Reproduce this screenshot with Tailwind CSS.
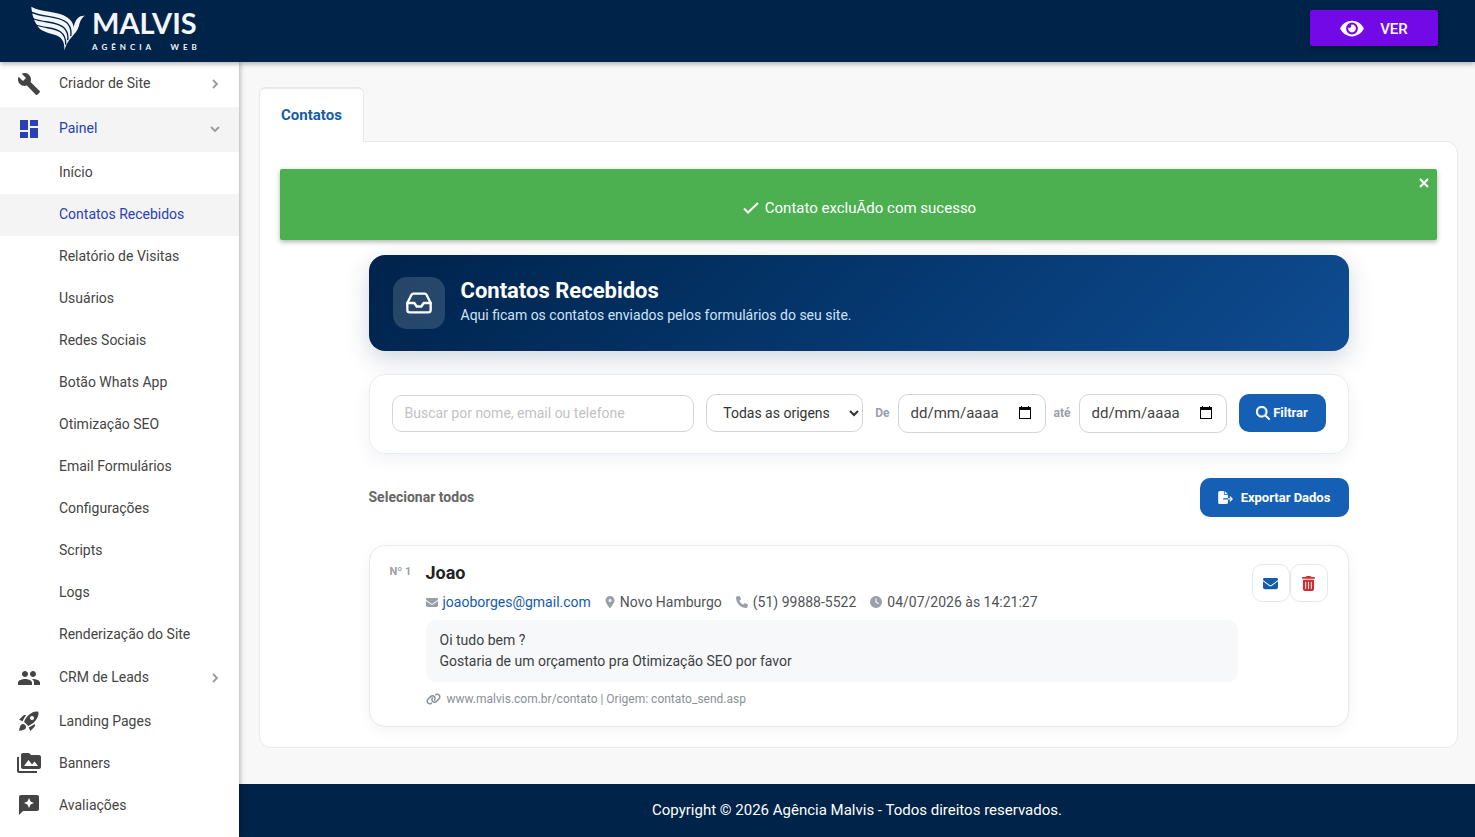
<!DOCTYPE html>
<html lang="pt-BR">
<head>
<meta charset="utf-8">
<meta name="viewport" content="width=device-width, initial-scale=1">
<title>Contatos Recebidos</title>
<script src="https://cdn.jsdelivr.net/npm/@tailwindcss/browser@4"></script>
</head>
<body class="flex min-h-screen flex-col bg-[#f8f8f8] font-[Roboto,sans-serif] text-sm text-[#444]">

<header class="relative z-20 flex h-[62px] shrink-0 items-center justify-between bg-[#002349] pr-[37px] pb-[6px] pl-[31px] shadow-[0_2px_5px_rgba(0,0,0,0.3)]">
  <a href="#" class="flex items-center gap-[7px] text-[#f2f5fc]" aria-label="Malvis Agência Web">
    <svg class="h-[45px] w-[54px]" viewBox="94 22 162 134" fill="none">
      <path fill="currentColor" d="M95 24C125 42 175 36 203 56C217 66 221 76 222 86C226 64 236 49 256 51C244 57 241 70 237 84C231 106 206 116 194 154C196 124 182 112 162 107C140 101 120 96 111 78C107 71 104 66 103 60C100 54 98 48 98 42C96 36 95 30 95 24Z"/>
      <path stroke="#002349" stroke-width="4" d="M94 40C130 56 178 50 201 71C213 82 216 94 213 112M99 59C135 73 172 67 192 86C204 98 207 108 204 124M106 77C135 90 162 84 182 99C194 108 199 122 198 138"/>
    </svg>
    <span class="flex flex-col pt-[5px]">
      <span class="font-[Lato,sans-serif] text-[29px] leading-7 font-bold">MALVIS</span>
      <span class="flex justify-between pt-[6px] font-[Lato,sans-serif] text-[8px] leading-[9px] font-bold tracking-[4px]"><span>AGÊNCIA</span><span class="-mr-1">WEB</span></span>
    </span>
  </a>
  <button type="button" class="flex h-9 w-32 items-center justify-center gap-4 rounded-xs bg-[#7209e6] text-[15px] font-medium text-white shadow-[0_2px_5px_rgba(0,0,0,0.25)]">
    <svg class="h-[21px] w-6" viewBox="0 0 576 512" fill="currentColor"><path d="M572.52 241.4C518.29 135.59 410.93 64 288 64S57.68 135.64 3.48 241.41a32.35 32.35 0 0 0 0 29.19C57.71 376.41 165.07 448 288 448s230.32-71.64 284.52-177.41a32.35 32.35 0 0 0 0-29.19zM288 400a144 144 0 1 1 144-144 143.93 143.93 0 0 1-144 144zm0-240a95.31 95.31 0 0 0-25.31 3.79 47.85 47.85 0 0 1-66.9 66.9A95.78 95.78 0 1 0 288 160z"/></svg>
    <span class="pt-1">VER</span>
  </button>
</header>

<div class="flex flex-1">
  <aside class="relative z-10 w-[239px] shrink-0 bg-white shadow-[1px_0_5px_rgba(0,0,0,0.3)]">
    <nav>
      <a href="#" class="flex h-[45px] items-center pr-[18px] pb-0.5 pl-[17px]">
        <svg class="h-6 w-6" viewBox="0 0 24 24" fill="currentColor"><path d="M22.7 19l-9.1-9.1c.9-2.3.4-5-1.5-6.9-2-2-5-2.4-7.4-1.3L9 6 6 9 1.6 4.7C.4 7.1.9 10.1 2.9 12.1c1.9 1.9 4.6 2.4 6.9 1.5l9.1 9.1c.4.4 1 .4 1.4 0l2.3-2.3c.5-.4.5-1.1.1-1.4z"/></svg>
        <span class="ml-[18px] flex-1 pb-0.5">Criador de Site</span>
        <svg class="h-3 w-3 text-[#999]" viewBox="0 0 12 12" fill="none" stroke="currentColor" stroke-width="1.8"><path d="M4 2l4 4-4 4"/></svg>
      </a>
      <a href="#" class="flex h-[45px] items-center bg-[#f4f4f4] pr-[18px] pb-0.5 pl-[17px] text-[#2a40b8]">
        <svg class="h-6 w-6" viewBox="0 0 24 24" fill="currentColor"><path d="M3 13h8V3H3v10zm0 8h8v-6H3v6zm10 0h8V11h-8v10zm0-18v6h8V3h-8z"/></svg>
        <span class="ml-[18px] flex-1 pb-0.5">Painel</span>
        <svg class="h-3 w-3 text-[#999]" viewBox="0 0 12 12" fill="none" stroke="currentColor" stroke-width="1.8"><path d="M2 4l4 4 4-4"/></svg>
      </a>
      <a href="#" class="flex h-[42px] items-center pb-0.5 pl-[59px]">Início</a>
      <a href="#" class="flex h-[42px] items-center bg-[#f4f4f4] pb-0.5 pl-[59px] text-[#2a40b8]">Contatos Recebidos</a>
      <a href="#" class="flex h-[42px] items-center pb-0.5 pl-[59px]">Relatório de Visitas</a>
      <a href="#" class="flex h-[42px] items-center pb-0.5 pl-[59px]">Usuários</a>
      <a href="#" class="flex h-[42px] items-center pb-0.5 pl-[59px]">Redes Sociais</a>
      <a href="#" class="flex h-[42px] items-center pb-0.5 pl-[59px]">Botão Whats App</a>
      <a href="#" class="flex h-[42px] items-center pb-0.5 pl-[59px]">Otimização SEO</a>
      <a href="#" class="flex h-[42px] items-center pb-0.5 pl-[59px]">Email Formulários</a>
      <a href="#" class="flex h-[42px] items-center pb-0.5 pl-[59px]">Configurações</a>
      <a href="#" class="flex h-[42px] items-center pb-0.5 pl-[59px]">Scripts</a>
      <a href="#" class="flex h-[42px] items-center pb-0.5 pl-[59px]">Logs</a>
      <a href="#" class="flex h-[42px] items-center pb-0.5 pl-[59px]">Renderização do Site</a>
      <a href="#" class="flex h-11 items-center pr-[18px] pl-[17px]">
        <svg class="h-6 w-6" viewBox="0 0 24 24" fill="currentColor"><path d="M16 11c1.66 0 2.99-1.34 2.99-3S17.66 5 16 5c-1.66 0-3 1.34-3 3s1.34 3 3 3zm-8 0c1.66 0 2.99-1.34 2.99-3S9.66 5 8 5C6.34 5 5 6.34 5 8s1.34 3 3 3zm0 2c-2.33 0-7 1.17-7 3.5V19h14v-2.5c0-2.33-4.67-3.5-7-3.5zm8 0c-.29 0-.62.02-.97.05 1.16.84 1.97 1.97 1.97 3.45V19h6v-2.5c0-2.33-4.67-3.5-7-3.5z"/></svg>
        <span class="ml-[18px] flex-1 pb-0.5">CRM de Leads</span>
        <svg class="h-3 w-3 text-[#999]" viewBox="0 0 12 12" fill="none" stroke="currentColor" stroke-width="1.8"><path d="M4 2l4 4-4 4"/></svg>
      </a>
      <a href="#" class="flex h-[42px] items-center pl-[17px]">
        <svg class="h-6 w-6" viewBox="0 0 24 24" fill="currentColor"><path d="M9.19 6.35c-2.04 2.29-3.44 5.58-3.57 5.89L2 10.69l4.05-4.05c.47-.47 1.15-.68 1.81-.55l1.33.26zM11.17 17s3.74-1.55 5.89-3.7c5.4-5.4 4.5-9.62 4.21-10.57-.95-.3-5.17-1.19-10.57 4.21C8.55 9.09 7 12.83 7 12.83L11.17 17zm6.48-2.19c-2.29 2.04-5.58 3.44-5.89 3.57L13.31 22l4.05-4.05c.47-.47.68-1.15.55-1.81l-.26-1.33zM9 18c0 .83-.34 1.58-.88 2.12C6.94 21.3 2 22 2 22s.7-4.94 1.88-6.12C4.42 15.34 5.17 15 6 15c1.66 0 3 1.34 3 3zm4-9c0-1.1.9-2 2-2s2 .9 2 2-.9 2-2 2-2-.9-2-2z"/></svg>
        <span class="ml-[18px]">Landing Pages</span>
      </a>
      <a href="#" class="flex h-[42px] items-center pl-[17px]">
        <svg class="h-6 w-6" viewBox="0 0 24 24" fill="currentColor"><path d="M2 6H0v5h.01L0 20c0 1.1.9 2 2 2h18v-2H2V6zm20-2h-8l-2-2H6c-1.1 0-1.99.9-1.99 2L4 16c0 1.1.9 2 2 2h16c1.1 0 2-.9 2-2V6c0-1.1-.9-2-2-2zM7 15l4.5-6 3.5 4.51 2.5-3.01L21 15H7z"/></svg>
        <span class="ml-[18px]">Banners</span>
      </a>
      <a href="#" class="flex h-[42px] items-center pl-[17px]">
        <svg class="h-6 w-6" viewBox="0 0 24 24" fill="currentColor"><path d="M20 2H4c-1.1 0-2 .9-2 2v18l4-4h14c1.1 0 2-.9 2-2V4c0-1.1-.9-2-2-2zm-6.43 9.57L12 15l-1.57-3.43L7 10l3.43-1.57L12 5l1.57 3.43L17 10l-3.43 1.57z"/></svg>
        <span class="ml-[18px]">Avaliações</span>
      </a>
    </nav>
  </aside>

  <div class="flex min-w-0 flex-1 flex-col">
    <main class="flex-1 pt-[25px] pr-[17px] pb-9 pl-5">
      <div class="flex">
        <a href="#" class="relative -mb-px flex h-[55px] items-center rounded-t-md border border-b-0 border-[#e6eaee] border-t-2 bg-white px-[21px] text-[15px] font-bold text-[#155cab]">Contatos</a>
      </div>
      <section class="rounded-b-xl rounded-tr-xl border border-[#e6eaee] bg-white px-5 pt-[27px] pb-5">
        <div role="alert" class="relative flex h-[71px] items-center justify-center gap-1.5 rounded-xs bg-[#4caf50] pt-2 pl-0.5 text-[15px] text-white shadow-[0_2px_5px_rgba(0,0,0,0.3)]">
          <svg class="mb-0.5 h-4 w-4" viewBox="0 0 16 16" fill="none" stroke="currentColor" stroke-width="2"><path d="M1 8.500l4 4L15 3"/></svg>
          <span>Contato excluÃ­do com sucesso</span>
          <button type="button" aria-label="Fechar" class="absolute top-2 right-[7px]">
            <svg class="h-3 w-3" viewBox="0 0 12 12" fill="none" stroke="currentColor" stroke-width="2.2"><path d="M2 2l8 8M10 2l-8 8"/></svg>
          </button>
        </div>

        <div class="mx-auto mt-[15px] max-w-[980px]">
          <div class="flex h-24 items-center gap-4 rounded-2xl bg-linear-135 from-[#00234b] to-[#0f4c92] px-6 text-white shadow-[0_8px_24px_rgba(0,35,73,0.18)]">
            <span class="flex h-[52px] w-[52px] items-center justify-center rounded-[14px] bg-white/15">
              <svg class="h-7 w-7" viewBox="0 0 24 24" fill="none" stroke="currentColor" stroke-width="2" stroke-linecap="round" stroke-linejoin="round"><path d="M22 12h-6l-2 3h-4l-2-3H2"/><path d="M5.450 5.110L2 12v6a2 2 0 0 0 2 2h16a2 2 0 0 0 2-2v-6l-3.450-6.890A2 2 0 0 0 16.760 4H7.240a2 2 0 0 0-1.790 1.110z"/></svg>
            </span>
            <div>
              <h1 class="text-[22px] leading-[26px] font-bold">Contatos Recebidos</h1>
              <p class="pb-0.5 text-sm leading-[22px] text-[#cfe3fa]">Aqui ficam os contatos enviados pelos formulários do seu site.</p>
            </div>
          </div>

          <form class="relative mt-[23px] flex h-20 items-center gap-3 rounded-2xl border border-[#e9edf2] bg-white px-[22px] pb-0.5 shadow-[0_6px_18px_rgba(0,35,73,0.06)]">
            <input type="text" aria-label="Buscar por nome, email ou telefone" placeholder="Buscar por nome, email ou telefone" class="h-[37px] min-w-0 flex-1 rounded-[10px] border border-[#d0d5d9] px-3 text-sm placeholder:text-[#c2c2c2]">
            <select aria-label="Origem" class="h-[38px] w-[157px] rounded-[10px] border border-[#d0d5d9] bg-white pl-3 text-sm text-[#333]"><option>Todas as origens</option></select>
            <div class="flex items-center gap-2 text-xs font-bold text-[#9aa0a8]">
              <label for="de">De</label>
              <div class="relative">
                <input id="de" type="text" placeholder="dd/mm/aaaa" class="h-[39px] w-[148px] rounded-[10px] border border-[#d0d5d9] px-3 text-[15px] font-normal placeholder:text-[#444]">
                <svg class="pointer-events-none absolute top-[12px] right-[15px] h-[13px] w-3 text-black" viewBox="0 0 12 13" fill="currentColor"><path d="M2 0h1v1h6V0h1v1h2v12H0V1h2zM1 4v8h10V4z" fill-rule="evenodd"/></svg>
              </div>
              <label for="ate">até</label>
              <div class="relative">
                <input id="ate" type="text" placeholder="dd/mm/aaaa" class="h-[39px] w-[148px] rounded-[10px] border border-[#d0d5d9] px-3 text-[15px] font-normal placeholder:text-[#444]">
                <svg class="pointer-events-none absolute top-[12px] right-[15px] h-[13px] w-3 text-black" viewBox="0 0 12 13" fill="currentColor"><path d="M2 0h1v1h6V0h1v1h2v12H0V1h2zM1 4v8h10V4z" fill-rule="evenodd"/></svg>
              </div>
            </div>
            <button type="button" class="flex h-[38px] w-[87px] items-center justify-center gap-[3px] rounded-[10px] bg-[#155fb5] text-[13px] font-bold text-white">
              <svg class="h-[14px] w-[14px]" viewBox="0 0 512 512" fill="currentColor" stroke="currentColor" stroke-width="14"><path d="M416 208c0 45.9-14.9 88.3-40 122.7L502.6 457.4c12.5 12.5 12.5 32.8 0 45.3s-32.8 12.5-45.3 0L330.7 376c-34.4 25.2-76.8 40-122.7 40C93.1 416 0 322.9 0 208S93.1 0 208 0S416 93.1 416 208zM208 352a144 144 0 1 0 0-288 144 144 0 1 0 0 288z"/></svg>
              Filtrar
            </button>
          </form>

          <div class="mt-6 flex h-[39px] items-center justify-between">
            <button type="button" class="pb-0.5 text-sm font-bold text-[#666]">Selecionar todos</button>
            <button type="button" class="flex h-[39px] w-[149px] items-center justify-center gap-2 rounded-[10px] bg-[#155fb5] pt-px text-[13px] font-bold text-white">
              <svg class="mb-0.5 h-[13px] w-[15px]" viewBox="0 0 576 512" fill="currentColor"><path d="M0 64C0 28.7 28.7 0 64 0H224V128c0 17.7 14.3 32 32 32H384V288H216c-13.3 0-24 10.7-24 24s10.7 24 24 24H384V448c0 35.3-28.7 64-64 64H64c-35.3 0-64-28.7-64-64V64zM384 336V288H494.1l-39-39c-9.4-9.4-9.4-24.6 0-33.9s24.6-9.4 33.9 0l80 80c9.4 9.4 9.4 24.6 0 33.9l-80 80c-9.4 9.4-24.6 9.4-33.9 0s-9.4-24.6 0-33.9l39-39H384zm0-208H256V0L384 128z"/></svg>
              Exportar Dados
            </button>
          </div>

          <article class="mt-7 flex rounded-2xl border border-[#e6e9ec] bg-white px-5 py-[18px] shadow-[0_4px_14px_rgba(0,35,73,0.05)]">
            <span class="w-9 text-[11px] leading-4 font-bold text-[#9aa0a8]">Nº 1</span>
            <div class="mr-[14px] min-w-0 flex-1">
              <h2 class="text-lg leading-[18px] font-bold text-[#222]">Joao</h2>
              <div class="mt-[10px] flex flex-wrap items-center gap-x-[14px] leading-5 text-[#505458]">
                <span class="flex items-center gap-[5px]">
                  <svg class="h-[13px] w-3 text-[#9aa0a8]" viewBox="0 0 512 512" fill="currentColor"><path d="M48 64C21.5 64 0 85.5 0 112c0 15.1 7.1 29.3 19.2 38.4L236.8 313.6c11.4 8.5 27 8.5 38.4 0L492.8 150.4c12.1-9.1 19.2-23.3 19.2-38.4c0-26.5-21.5-48-48-48H48zM0 176V384c0 35.3 28.7 64 64 64H448c35.3 0 64-28.7 64-64V176L294.4 339.2c-22.8 17.1-54 17.1-76.8 0L0 176z"/></svg>
                  <a href="mailto:joaoborges@gmail.com" class="text-[#155cab]">joaoborges@gmail.com</a>
                </span>
                <span class="flex items-center gap-[5px]">
                  <svg class="h-3 w-[10px] text-[#9aa0a8]" viewBox="0 0 384 512" fill="currentColor"><path d="M215.7 499.2C267 435 384 279.4 384 192C384 86 298 0 192 0S0 86 0 192c0 87.4 117 243 168.3 307.2c12.3 15.3 35.1 15.3 47.4 0zM192 128a64 64 0 1 1 0 128 64 64 0 1 1 0-128z"/></svg>
                  Novo Hamburgo
                </span>
                <span class="flex items-center gap-[5px]">
                  <svg class="h-3 w-3 text-[#9aa0a8]" viewBox="0 0 512 512" fill="currentColor"><path d="M164.9 24.6c-7.7-18.6-28-28.5-47.4-23.2l-88 24C12.1 30.2 0 46 0 64C0 311.4 200.6 512 448 512c18 0 33.8-12.1 38.6-29.5l24-88c5.3-19.4-4.6-39.7-23.2-47.4l-96-40c-16.3-6.8-35.2-2.1-46.3 11.6L304.7 368C234.3 334.7 177.3 277.7 144 207.3L193.3 167c13.7-11.2 18.4-30 11.6-46.3l-40-96z"/></svg>
                  (51) 99888-5522
                </span>
                <span class="flex items-center gap-[5px]">
                  <svg class="h-3 w-3 text-[#9aa0a8]" viewBox="0 0 512 512" fill="currentColor"><path fill-rule="evenodd" d="M256 0a256 256 0 1 1 0 512A256 256 0 1 1 256 0zM232 120V256c0 8 4 15.5 10.7 20l96 64c11 7.4 25.9 4.4 33.3-6.7s4.4-25.9-6.7-33.3L280 243.2V120c0-13.3-10.7-24-24-24s-24 10.7-24 24z"/></svg>
                  04/07/2026 às 14:21:27
                </span>
              </div>
              <p class="mt-2 rounded-[10px] bg-[#f6f8fa] px-[14px] py-[10px] leading-[21px] text-[#3c4043]">Oi tudo bem ?<br>Gostaria de um orçamento pra Otimização SEO por favor</p>
              <p class="mt-2 flex items-center gap-1.5 text-xs leading-[18px] text-[#8a9097]">
                <svg class="h-3 w-[15px]" viewBox="0 0 640 512" fill="currentColor"><path d="M579.8 267.7c56.5-56.5 56.5-148 0-204.5c-50-50-128.8-56.5-186.3-15.4l-1.6 1.1c-14.4 10.3-17.7 30.3-7.4 44.6s30.3 17.7 44.6 7.4l1.6-1.1c32.1-22.900 76-19.300 103.800 8.600c31.500 31.500 31.500 82.500 0 114L422.300 334.800c-31.500 31.500-82.500 31.500-114 0c-27.900-27.900-31.500-71.800-8.600-103.800l1.100-1.600c10.300-14.400 6.900-34.400-7.400-44.600s-34.400-6.900-44.600 7.400l-1.100 1.600C206.500 251.200 213 330 263 380c56.500 56.500 148 56.500 204.500 0L579.800 267.700zM60.200 244.300c-56.500 56.500-56.500 148 0 204.500c50 50 128.800 56.500 186.300 15.400l1.600-1.100c14.400-10.300 17.700-30.300 7.400-44.600s-30.300-17.700-44.600-7.400l-1.600 1.100c-32.100 22.900-76 19.300-103.800-8.600C74 372 74 321 105.500 289.500L217.700 177.200c31.500-31.500 82.500-31.500 114 0c27.900 27.900 31.500 71.800 8.600 103.900l-1.100 1.600c-10.300 14.400-6.900 34.400 7.400 44.600s34.400 6.900 44.600-7.400l1.100-1.600C433.500 260.800 427 182 377 132c-56.500-56.500-148-56.500-204.500 0L60.200 244.300z"/></svg>
                www.malvis.com.br/contato | Origem: contato_send.asp
              </p>
            </div>
            <div class="flex items-start">
              <button type="button" aria-label="Enviar email" class="flex h-[38px] w-[38px] items-center justify-center rounded-[10px] border border-[#e6e9ec] bg-white text-[#155cab]">
                <svg class="h-[15px] w-[15px]" viewBox="0 0 512 512" fill="currentColor"><path d="M48 64C21.5 64 0 85.5 0 112c0 15.1 7.1 29.3 19.2 38.4L236.8 313.6c11.4 8.5 27 8.5 38.4 0L492.8 150.4c12.1-9.1 19.2-23.3 19.2-38.4c0-26.5-21.5-48-48-48H48zM0 176V384c0 35.3 28.7 64 64 64H448c35.3 0 64-28.7 64-64V176L294.4 339.2c-22.8 17.1-54 17.1-76.8 0L0 176z"/></svg>
              </button>
              <button type="button" aria-label="Excluir contato" class="flex h-[38px] w-[38px] items-center justify-center rounded-[10px] border border-[#e6e9ec] bg-white text-[#cf2e36]">
                <svg class="h-[15px] w-[13px]" viewBox="0 0 448 512" fill="currentColor"><path d="M135.2 17.7L128 32H32C14.3 32 0 46.3 0 64S14.3 96 32 96H416c17.7 0 32-14.3 32-32s-14.3-32-32-32H320l-7.2-14.3C307.4 6.8 296.3 0 284.2 0H163.8c-12.1 0-23.2 6.8-28.6 17.7zM416 128H32V448c0 35.3 28.7 64 64 64H352c35.3 0 64-28.7 64-64V128zM144 208V432c0 8.8-7.2 16-16 16s-16-7.2-16-16V208c0-8.8 7.2-16 16-16s16 7.2 16 16zm96 0V432c0 8.8-7.2 16-16 16s-16-7.2-16-16V208c0-8.8 7.2-16 16-16s16 7.2 16 16zm96 0V432c0 8.8-7.2 16-16 16s-16-7.2-16-16V208c0-8.8 7.2-16 16-16s16 7.2 16 16z"/></svg>
              </button>
            </div>
          </article>
        </div>
      </section>
    </main>
    <footer class="flex h-[53px] shrink-0 items-center justify-center bg-[#002349] text-[15px] text-white">Copyright © 2026 Agência Malvis - Todos direitos reservados.</footer>
  </div>
</div>
</body>
</html>
